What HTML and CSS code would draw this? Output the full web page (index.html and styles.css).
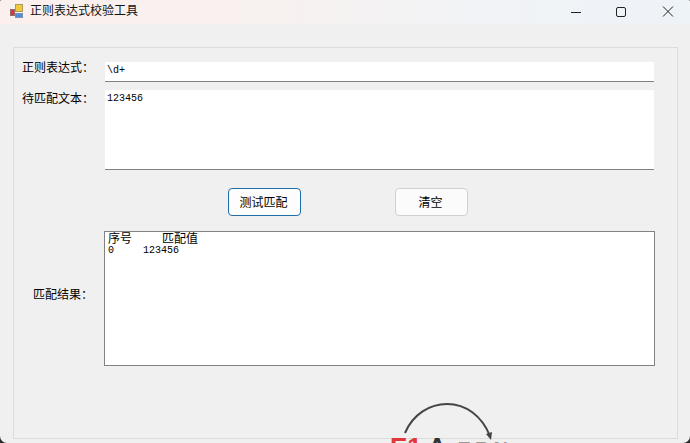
FILE: index.html
```html
<!DOCTYPE html>
<html lang="zh">
<head>
<meta charset="utf-8">
<title>正则表达式校验工具</title>
<link rel="stylesheet" href="styles.css">
</head>
<body>
<div class="window">
  <header class="titlebar">
    <svg class="app-icon" width="16" height="16" viewBox="0 0 16 16">
      <rect x="1.5" y="1.5" width="13" height="13" fill="#f4f4ee"/>
      <rect x="7.5" y="1.5" width="7" height="7" fill="#f2c83c" stroke="#b09a5a" stroke-width="1"/>
      <rect x="2.5" y="6.5" width="4" height="6" fill="#d8383a" stroke="#9a6a6a" stroke-width="1"/>
      <rect x="7.5" y="10.5" width="7" height="4" fill="#4f8fd8" stroke="#7a94b8" stroke-width="1"/>
    </svg>
    <span class="title">正则表达式校验工具</span>
    <div class="controls">
      <svg class="ctl" width="46" height="22" viewBox="0 0 46 22"><path d="M18 11.5h10" stroke="#222" stroke-width="1" fill="none"/></svg>
      <svg class="ctl" width="46" height="22" viewBox="0 0 46 22"><rect x="17.5" y="6.5" width="9" height="9" rx="1.5" stroke="#222" stroke-width="1" fill="none"/></svg>
      <svg class="ctl" width="46" height="22" viewBox="0 0 46 22"><path d="M18 5.5l10 10M28 5.5l-10 10" stroke="#222" stroke-width="1" fill="none"/></svg>
    </div>
  </header>
  <main class="group">
    <div class="row row-regex">
      <label class="label">正则表达式：</label>
      <div class="input mono">\d+</div>
    </div>
    <div class="row row-text">
      <label class="label">待匹配文本：</label>
      <div class="input area mono">123456</div>
    </div>
    <div class="buttons">
      <button class="btn btn-primary">测试匹配</button>
      <button class="btn">清空</button>
    </div>
    <div class="row row-result">
      <label class="label">匹配结果：</label>
      <div class="listbox mono">
        <div class="list-head"><span class="col-a">序号</span><span class="col-b">匹配值</span></div>
        <div class="list-row"><span class="col-a">0</span><span class="col-c">123456</span></div>
      </div>
    </div>
  </main>
  <div class="watermark">
    <svg class="wm-arc" width="100" height="45" viewBox="0 0 100 45">
      <path d="M5 35C13 16 30 6 47 6C66 6 82 18 90 38" stroke="#444" stroke-width="2" fill="none"/>
      <path d="M91 42l-5-6 6-2z" fill="#444"/>
    </svg>
    <span class="wm-text"><span class="wm-red">E1</span><span class="wm-dark">A</span><span class="wm-grey">ERN</span></span>
  </div>
</div>
</body>
</html>
```

FILE: styles.css
```css
* { box-sizing: border-box; }
html, body { margin: 0; padding: 0; height: 100%; background: #2a2a2a; }
body {
  overflow: hidden;
  font-family: "Noto Sans CJK SC", "Liberation Sans", sans-serif;
  font-size: 12px;
  color: #000;
}
.window {
  position: relative;
  width: 690px;
  height: 443px;
  overflow: hidden;
  background: #f0f0f0;
  border-radius: 2px 2px 7px 7px;
}
.titlebar {
  height: 24px;
  display: flex;
  align-items: center;
  padding-left: 8px;
  background: linear-gradient(90deg, #fbf0ee 0%, #f8f1ef 35%, #f1f3f6 70%, #eef3f8 100%);
}
.app-icon { margin-top: -2px; flex: none; }
.title { margin-left: 6px; margin-top: -4px; line-height: 16px; color: #111; }
.controls { margin-left: auto; display: flex; margin-right: -1px; }
.ctl { display: block; }
.group {
  margin: 23px 12px 0 13px;
  height: 392px;
  border: 1px solid #dcdcdc;
  padding-top: 14px;
  display: flex;
  flex-direction: column;
}
.row { display: flex; }
.label {
  width: 75px;
  margin-left: 5px;
  flex: none;
  line-height: 14px;
  white-space: nowrap;
  text-align: right;
}
.row-regex .label { margin-top: -2px; }
.row-text .label { margin-top: 1px; }
.row-result .label { margin-top: -10px; padding-right: 1px; }
.mono { font-family: "Liberation Mono", "Noto Sans CJK SC", monospace; font-size: 10px; }
.input {
  width: 549px;
  margin-left: 11px;
  height: 20px;
  background: #fff;
  border-bottom: 1px solid #808080;
  padding: 2px;
  line-height: 14px;
}
.row-text { margin-top: 8px; }
.area { height: 80px; }
.buttons { display: flex; margin-top: 18px; margin-left: 214px; gap: 94px; }
.btn {
  width: 73px;
  height: 28px;
  background: #fbfbfb;
  border: 1px solid #d0d0d0;
  border-radius: 4px;
  font: inherit;
  color: #000;
  padding: 0 2px 2px 0;
}
.btn-primary { border: 1px solid #1f6ea8; background: #fdfdfd; }
.row-result { margin-top: 15px; align-items: center; }
.listbox {
  width: 551px;
  height: 135px;
  margin-left: 10px;
  background: #fff;
  border: 1px solid #828282;
  padding: 0 3px;
  line-height: 12px;
}
.list-head { display: flex; font-family: "Noto Sans CJK SC", sans-serif; font-size: 12px; }
.list-row { display: flex; margin-top: 1px; }
.col-a { width: 54px; flex: none; }
.col-c { margin-left: -19px; }
.watermark { position: absolute; left: 388px; top: 398px; width: 140px; height: 45px; }
.wm-arc { position: absolute; left: 12px; top: 0; }
.wm-text {
  position: absolute;
  left: 2px;
  top: 34px;
  font-family: "Liberation Sans", sans-serif;
  font-weight: 700;
  font-size: 26px;
  line-height: 30px;
  white-space: nowrap;
}
.wm-red { color: #e0363c; }
.wm-dark { color: #333; margin-left: 6px; }
.wm-grey { color: #999; margin-left: 11px; font-size: 20px; letter-spacing: 4px; }
```
